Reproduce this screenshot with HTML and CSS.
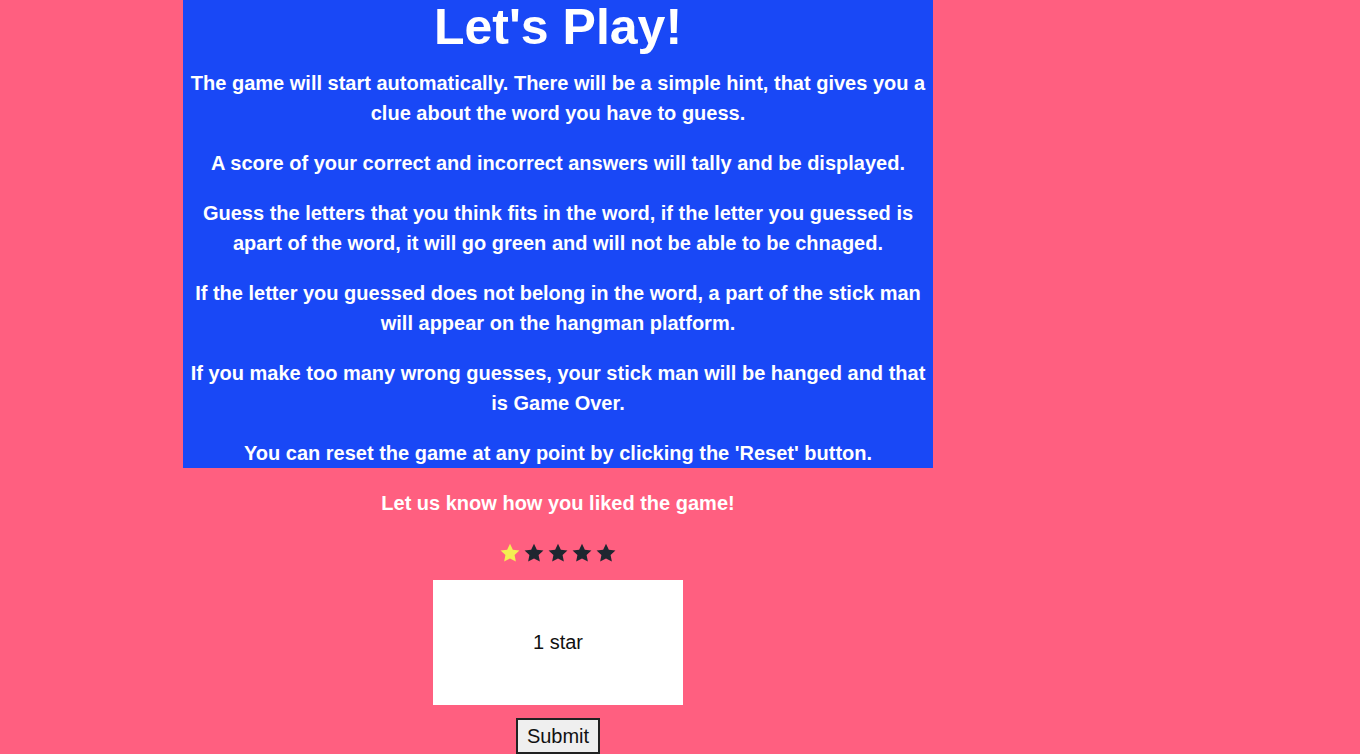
FILE: index.html
```html
<!DOCTYPE html>
<html lang="en">
<head>
<meta charset="utf-8">
<title>Let's Play!</title>
<link rel="stylesheet" href="styles.css">
</head>
<body>
<main class="page">
  <section class="rules">
    <h1 class="title">Let's Play!</h1>
    <p>The game will start automatically. There will be a simple hint, that gives you a clue about the word you have to guess.</p>
    <p>A score of your correct and incorrect answers will tally and be displayed.</p>
    <p>Guess the letters that you think fits in the word, if the letter you guessed is apart of the word, it will go green and will not be able to be chnaged.</p>
    <p>If the letter you guessed does not belong in the word, a part of the stick man will appear on the hangman platform.</p>
    <p>If you make too many wrong guesses, your stick man will be hanged and that is Game Over.</p>
    <p>You can reset the game at any point by clicking the 'Reset' button.</p>
  </section>
  <section class="feedback">
    <p class="ask">Let us know how you liked the game!</p>
    <div class="stars">
      <svg class="star on" viewBox="0 0 24 24"><path d="M12 1.8l3.1 6.6 7.2.9-5.3 5 1.4 7.1L12 17.9l-6.4 3.5 1.4-7.1-5.3-5 7.2-.9z"/></svg>
      <svg class="star" viewBox="0 0 24 24"><path d="M12 1.8l3.1 6.6 7.2.9-5.3 5 1.4 7.1L12 17.9l-6.4 3.5 1.4-7.1-5.3-5 7.2-.9z"/></svg>
      <svg class="star" viewBox="0 0 24 24"><path d="M12 1.8l3.1 6.6 7.2.9-5.3 5 1.4 7.1L12 17.9l-6.4 3.5 1.4-7.1-5.3-5 7.2-.9z"/></svg>
      <svg class="star" viewBox="0 0 24 24"><path d="M12 1.8l3.1 6.6 7.2.9-5.3 5 1.4 7.1L12 17.9l-6.4 3.5 1.4-7.1-5.3-5 7.2-.9z"/></svg>
      <svg class="star" viewBox="0 0 24 24"><path d="M12 1.8l3.1 6.6 7.2.9-5.3 5 1.4 7.1L12 17.9l-6.4 3.5 1.4-7.1-5.3-5 7.2-.9z"/></svg>
    </div>
    <div class="output">1 star</div>
    <button class="submit" type="button">Submit</button>
  </section>
</main>
</body>
</html>
```
FILE: styles.css
```css
html, body {
  margin: 0;
  padding: 0;
  background: #ff5f80;
}
body {
  font-family: "Liberation Sans", Arial, sans-serif;
  color: #ffffff;
}
.page {
  width: 750px;
  margin-left: 183px;
  display: flex;
  flex-direction: column;
}
.rules {
  background: #1948f6;
  text-align: center;
  display: flow-root;
}
.title {
  margin: 0;
  font-size: 50px;
  line-height: 48px;
  padding-top: 3px;
  font-weight: 900;
  letter-spacing: 0;
}
.rules p {
  margin: 20px 0 0;
  font-size: 20px;
  font-weight: bold;
  line-height: 30px;
}
.rules .title + p { margin-top: 17px; }
.feedback {
  display: flex;
  flex-direction: column;
  align-items: center;
}
.ask {
  margin: 20px 0 0;
  font-size: 20px;
  font-weight: bold;
  line-height: 30px;
}
.stars {
  margin-top: 20px;
  height: 30px;
  display: flex;
  align-items: center;
  gap: 2px;
}
.star {
  width: 22px;
  height: 22px;
  fill: #1f2630;
}
.star.on {
  fill: #f4ee52;
}
.output {
  margin-top: 12px;
  width: 250px;
  height: 125px;
  background: #ffffff;
  color: #111111;
  font-size: 20px;
  display: flex;
  align-items: center;
  justify-content: center;
}
.submit {
  margin-top: 13px;
  height: 36px;
  padding: 0 9px;
  font-family: "Liberation Sans", Arial, sans-serif;
  font-size: 20px;
  color: #111111;
  background: #efefef;
  border: 2px solid #222222;
  border-radius: 0;
}
```
